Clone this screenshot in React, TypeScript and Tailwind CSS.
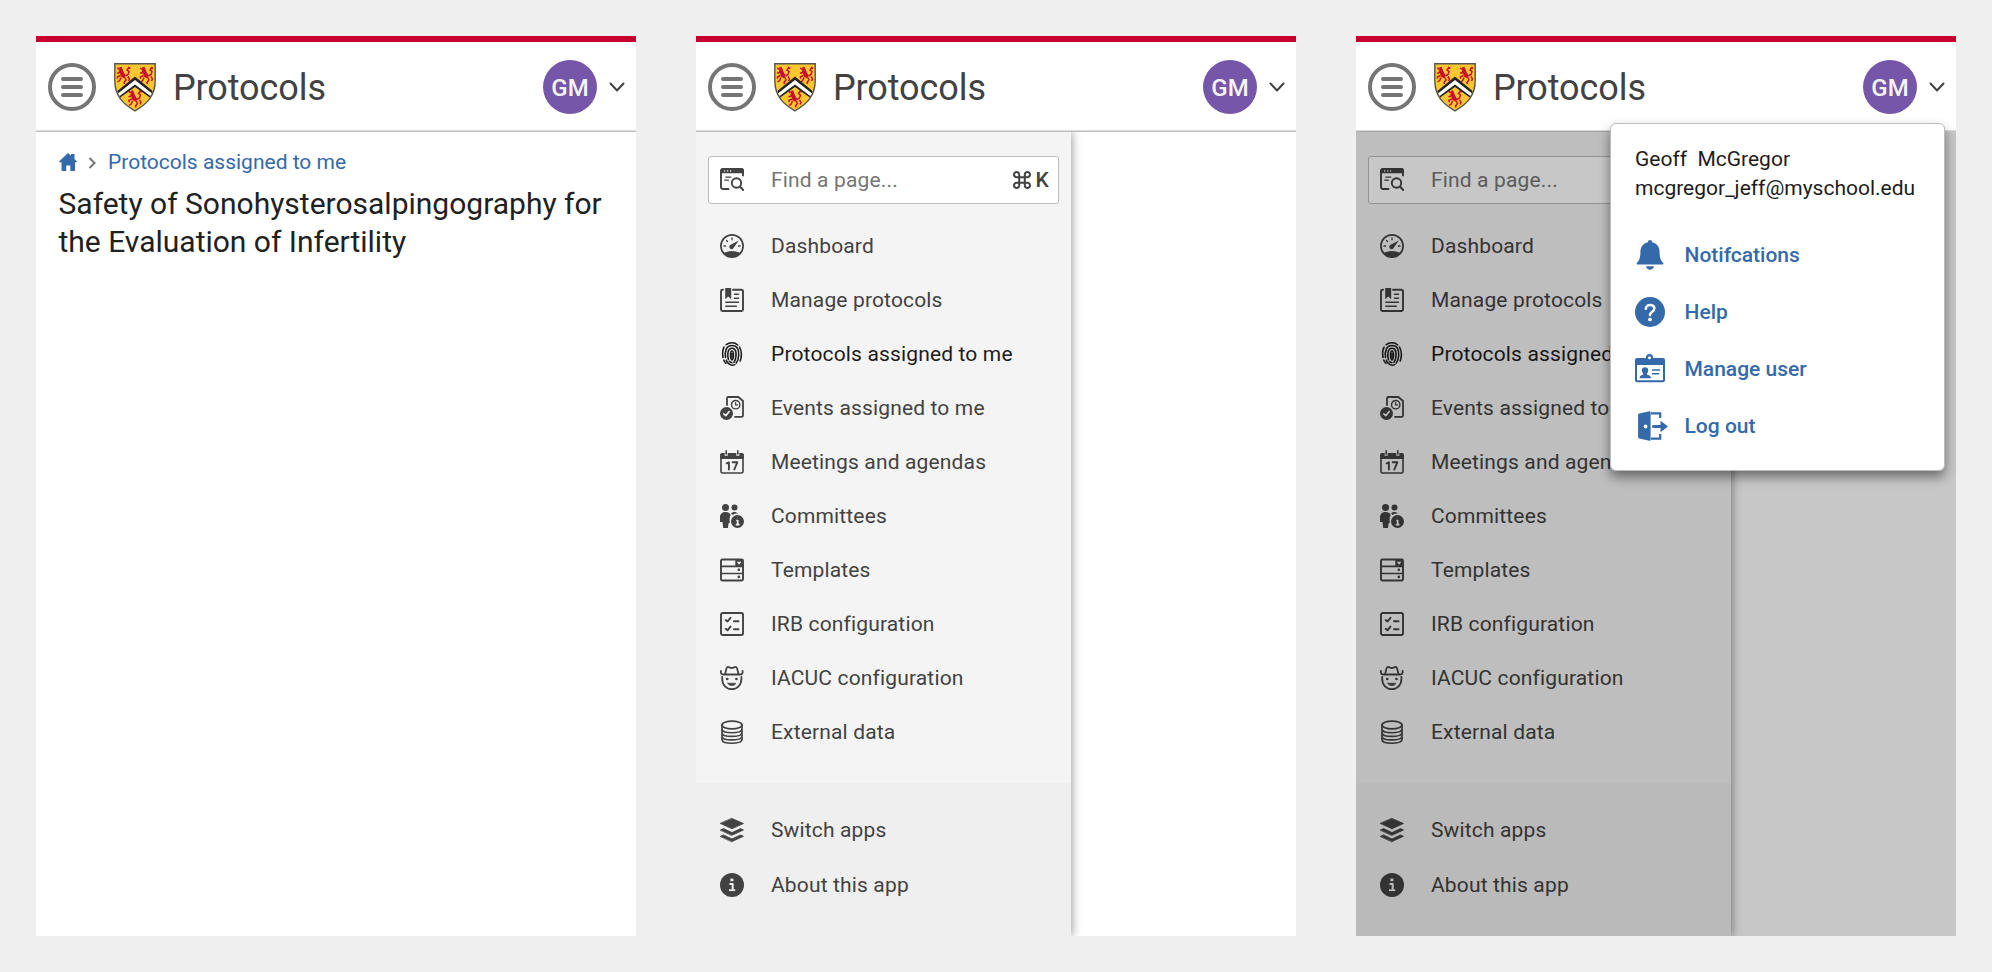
import React from "react";

const stroke = {
  fill: "none",
  stroke: "currentColor",
  strokeWidth: 1.9,
  strokeLinecap: "round" as const,
  strokeLinejoin: "round" as const,
};

function Svg({ children, className = "size-6" }: { children: React.ReactNode; className?: string }) {
  return (
    <svg viewBox="0 0 24 24" className={`${className} shrink-0 overflow-visible`} {...stroke}>
      {children}
    </svg>
  );
}

const SearchPage = () => (
  <Svg>
    <path d="M8.5 21H3a2 2 0 0 1-2-2V3a2 2 0 0 1 2-2h18a2 2 0 0 1 2 2v4.500" />
    <path d="M1 4.200V3a2 2 0 0 1 2-2h18a2 2 0 0 1 2 2v1.200z" fill="currentColor" />
    <path d="M4.600 2.900h.1M7.600 2.900h.1M10.600 2.900h.1" stroke="white" strokeWidth="1.400" />
    <path d="M5.800 9.200h5M4.800 12.200h3.600" strokeWidth="1.300" />
    <circle cx="16.500" cy="15" r="4.700" />
    <path d="m20 18.500 3.200 3.500" />
  </Svg>
);

const Gauge = () => (
  <Svg>
    <circle cx="12" cy="12" r="11.100" strokeWidth="1.700" />
    <path d="M3.800 19.300c4.500-2.300 11.900-2.300 16.400 0A11 11 0 0 1 3.800 19.300z" fill="currentColor" strokeWidth=".8" />
    <path d="M18.800 6.500 13.700 13.800a2.300 2.300 0 1 1-3.100-3z" fill="currentColor" stroke="none" />
    <path d="M12 4v1.800M6.500 6.400l1 1.100M3.900 12h1.700M18.400 12h1.700" strokeWidth="1.300" />
  </Svg>
);

const Protocol = () => (
  <Svg>
    <path d="M3 1.700H2.500A1.500 1.500 0 0 0 1 3.200v18.300A1.500 1.500 0 0 0 2.500 23h19a1.500 1.500 0 0 0 1.500-1.500V3.200a1.500 1.500 0 0 0-1.500-1.500H13" />
    <path d="M5.200 0h6v11.200L8.200 8.500l-3 2.700z" fill="currentColor" stroke="none" />
    <path d="M14.500 6.200h4M14.500 10.200h4M5.800 14.300h12.700M5.800 18.300h10.500" strokeWidth="1.500" />
  </Svg>
);

const Fingerprint = () => (
  <Svg>
    <g strokeWidth="1.600">
      <path d="M6.200 2.700A9.300 9.300 0 0 1 12 .8c2.200 0 4.200.8 5.700 2.200M19.500 5.200c1.400 2.300 1.900 4.500 1.900 7.300 0 2.400-.4 4.600-1.200 6.400M3 15.500c-.6-3.600-.6-7.500 1.100-10.300M3.800 18.200c.5 1.200 1.200 2.200 2.100 3.100" />
      <path d="M5.500 15.500C4.600 9.200 6.300 3.500 12 3.500c5.400 0 7 4.300 6.700 10-.2 3.300-1 5.700-2.500 7.600M6.300 18.200c1 2.600 2.800 4.500 5.700 5 1 .1 2-.2 2.800-.6" />
      <path d="M8.400 17.500c-1.100-3.700-1.200-11.300 3.600-11.300 3.700 0 4.300 3.900 4 7.800-.2 2.700-.8 4.700-2 6.300M9.300 19.300c.7.900 1.600 1.400 2.700 1.400" />
      <path d="M12 18c-2-1.200-2-9 0-9s2 7.800 0 9z" />
      <path d="M12 11.500v4" />
    </g>
  </Svg>
);

const EventIcon = () => (
  <Svg>
    <path d="M7 9V2.300A1.300 1.300 0 0 1 8.300 1h10L23 5v14.500a1.300 1.300 0 0 1-1.300 1.300h-6.700" strokeWidth="1.800" />
    <circle cx="15.700" cy="8.700" r="4.200" strokeWidth="1.400" />
    <path d="M15.600 6.500v2.400h2" strokeWidth="1.200" />
    <circle cx="6.500" cy="17.500" r="6.500" fill="currentColor" stroke="none" />
    <path d="m3.800 17.900 2 1.800 3.400-4.200" stroke="#f4f4f4" strokeWidth="1.600" />
  </Svg>
);

const CalendarIcon = () => (
  <Svg>
    <path d="M1 5v16.500A1.500 1.500 0 0 0 2.500 23h19a1.500 1.500 0 0 0 1.500-1.500V5" strokeWidth="1.600" />
    <path d="M.2 9V4.500A1.500 1.500 0 0 1 1.700 3h3v2.800h3V3h8.600v2.800h3V3h3a1.500 1.500 0 0 1 1.500 1.500V9z" fill="currentColor" stroke="none" />
    <path d="M6.200.7V4M17.800.7V4" strokeWidth="1.600" />
    <path d="m6.700 13.300 2.200-1v7.200M12.700 12.300h4.600l-3 7.200" />
  </Svg>
);

const People = () => (
  <Svg>
    <g fill="currentColor" stroke="none">
      <circle cx="5.500" cy="3.500" r="3.500" />
      <circle cx="14.500" cy="3.500" r="3" />
      <path d="M0 16v-3c0-3 2.300-5 5.500-5s5 1.400 5 3.500c-1 2.500-1.300 5-.5 7l-1.500 1-.5 4.500H3.200L2.500 18H0z" />
      <path d="M11 9.500C12 8 16 7 18.200 9.700c-2.200-.4-4 0-5.600 1.200z" />
      <circle cx="17.500" cy="17.500" r="6.500" />
    </g>
    <path d="M17.400 13.700h.2M16.300 16.500h1.400v4M15.700 20.700h3.800" stroke="#f4f4f4" strokeWidth="1.700" strokeLinecap="butt" />
  </Svg>
);

const Templates = () => (
  <Svg>
    <rect x="1" y="1.500" width="22" height="21" rx="1.200" />
    <path d="M1 8.300h22M1 15.500h22" strokeWidth="1.700" />
    <path d="M15.300 2h7.200v6h-7.200z" fill="currentColor" stroke="none" />
    <path d="M16.800 3.700h4.600l-2.300 3z" fill="#f4f4f4" stroke="none" />
    <path d="M18.800 11.800h.1M18.800 18.900h.1" strokeWidth="2.600" />
  </Svg>
);

const Checklist = () => (
  <Svg>
    <rect x="1" y="1" width="22" height="22" rx="1.800" />
    <path d="m5.700 8 1.800 1.500 3-3.700M5.700 16.800l1.800 1.500 3-3.700M14 9.200h4.500M14 17.200h4.500" />
  </Svg>
);

const Farmer = () => (
  <Svg>
    <g strokeWidth="1.800">
      <path d="M.9 5c-.5 2.200.6 3.500 3 3.500H19.600c2.400 0 3.500-1.300 3-3.500M4.800 8.300C6.200 6.500 5.700.9 8 .9c1.300 0 1.900 1.100 3.800 1.100S14.300.9 15.600.9c2.300 0 1.800 5.600 3.200 7.400" />
      <path d="M2.200 11v2c0 6 4.300 10.100 9.600 10.100S21.400 19 21.400 13v-2" />
    </g>
    <path d="M7.200 13h.1M16.400 13h.1" strokeWidth="2.600" />
    <path d="M7.800 17.200h8c-.7 3.200-7.300 3.200-8 0z" fill="currentColor" strokeWidth=".6" />
  </Svg>
);

const Database = () => (
  <Svg>
    <g strokeWidth="1.700">
      <ellipse cx="12" cy="5" rx="10" ry="3.900" />
      <path d="M2 5v14.500c0 5 20 5 20 0V5M2 9c0 5 20 5 20 0M2 12.700c0 5 20 5 20 0M2 16.200c0 5 20 5 20 0" />
    </g>
  </Svg>
);

const Layers = () => (
  <Svg>
    <g fill="currentColor" strokeWidth=".8">
      <path d="m12 .5 11.500 5L12 10.800.5 5.500z" />
      <path d="m.5 12 3-1.400 8.500 4 8.500-4 3 1.400L12 17.300z" />
      <path d="m.5 18.300 3-1.400 8.500 4 8.500-4 3 1.400L12 23.600z" />
    </g>
  </Svg>
);

const Info = () => (
  <Svg>
    <circle cx="12" cy="12" r="12" fill="currentColor" stroke="none" />
    <g stroke="#f0f0f0" strokeLinecap="butt">
      <path d="M10.400 6.900h3" strokeWidth="2.600" />
      <path d="M9.500 11h3.200v6" strokeWidth="2" />
      <path d="M9 17.200h6.200" strokeWidth="1.800" />
    </g>
  </Svg>
);

const Bell = () => (
  <svg viewBox="0 0 30 30" className="size-[30px] shrink-0" fill="currentColor">
    <path d="M15 0a2 2 0 0 1 2 2.200c5 1 7.600 4.800 7.600 9.800 0 5.800 1 8.500 3.300 10.500.8.900.4 2-.7 2H2.800c-1.100 0-1.500-1.100-.7-2 2.300-2 3.300-4.700 3.300-10.500 0-5 2.600-8.800 7.600-9.800A2 2 0 0 1 15 0z" />
    <path d="M11 26.300h8c-.6 4.600-7.400 4.600-8 0z" />
  </svg>
);

const Help = () => (
  <svg viewBox="0 0 30 30" className="size-[30px] shrink-0" fill="none">
    <circle cx="15" cy="15" r="15" fill="currentColor" />
    <path d="M10.800 11.800c0-5.200 8.600-5 8.600-.3 0 3.300-4.400 3.200-4.400 6.500" stroke="white" strokeWidth="2.500" strokeLinecap="round" />
    <circle cx="15" cy="22.400" r="1.900" fill="white" />
  </svg>
);

const Badge = () => (
  <svg viewBox="0 0 30 30" className="size-[30px] shrink-0 overflow-visible" fill="currentColor">
    <path
      fillRule="evenodd"
      d="M2 4h8v3.500h9V4h9a2 2 0 0 1 2 2v20.300a2 2 0 0 1-2 2H2a2 2 0 0 1-2-2V6a2 2 0 0 1 2-2zm0 7v15.300h26V11z"
    />
    <path d="M10 4v4.500h9V4h-1v-.5a3.500 3.500 0 0 0-7 0V4z" />
    <circle cx="14.500" cy="3.700" r="1.500" fill="white" />
    <path d="M10 13.200c4 0 4 4.300 2 6.300v.9c1.500.7 3.700.7 4 3.800H4.500c.3-3.100 2.500-3.100 3.700-3.800v-.9c-2-2-2.200-6.300 1.800-6.300z" />
    <path d="M17.600 15.900h7M17.600 19.800h6" stroke="currentColor" strokeWidth="1.500" strokeLinecap="round" />
  </svg>
);

const Logout = () => (
  <svg viewBox="0 0 30 30" className="ml-[3px] size-[30px] shrink-0" fill="currentColor">
    <path fillRule="evenodd" d="M1.200 2.500 11.500.2Q12.600 0 12.600 1v28q0 1-1.100.8L1.200 27.500Q.1 27.300.1 26.300V3.700q0-1 1.100-1.200zM7.600 13.600a1.900 1.900 0 1 0 0 3.800 1.900 1.900 0 0 0 0-3.800z" />
    <path d="M13 2.400h9.200V7M13 27.600h9.200V23" fill="none" stroke="currentColor" strokeWidth="2.200" />
    <path d="M15.500 15.500H25" fill="none" stroke="currentColor" strokeWidth="3" strokeLinecap="round" />
    <path d="m22.500 9.700 7.500 5.800-7.500 5.700z" />
  </svg>
);

const Lion = () => (
  <>
    <path d="M2.500 1.500 5 .8l1 2.400 1.200 3 2 3.300-1.700 2.700-3-1.400-1-3.300L2.200 6l.6-2z" fill="#c8102e" stroke="none" />
    <path d="m3.500 6.500-3 .8M.8 1.800l1.700 1.700M4 9.500 1 10.800v2M4.500 11.500l-1.300 3L1 16M8 11l1.500 3-2 2.500.5 1.500M9 10l2.500-1.500 1-3L10.500 4l1.700-2.500 1.600.8M11.500 10.500l1.500 2.500-1 2" strokeWidth="1.500" />
  </>
);

const Crest = () => (
  <svg viewBox="0 0 42 49" className="ml-[18px] h-[49px] w-[42px] shrink-0">
    <path d="M.8.8h40.400v16.400C41.200 33 33 41 21 47.800 9 41 .8 33 .8 17.200z" fill="#fdc82f" stroke="#54534d" strokeWidth="1.400" />
    <g fill="none" stroke="#c8102e">
      <g transform="translate(2.500 3)"><Lion /></g>
      <g transform="translate(25.500 3)"><Lion /></g>
      <g transform="translate(14 26.500)"><Lion /></g>
    </g>
    <path d="M21 13.500 38.600 28 35.800 34.500 21 24 6.200 34.500 3.400 28z" fill="#242424" />
    <path d="M21 17 37.800 30.300 36.300 32.900 21 21.500 5.700 32.900 4.200 30.300z" fill="white" />
  </svg>
);

function Header() {
  return (
    <header className="flex h-[95px] shrink-0 items-center border-b border-t-6 border-b-[#dcdcdc] border-t-[#c8002d] bg-white pl-3 pr-[11px] pt-[2px]">
      <svg viewBox="0 0 48 48" className="size-12 shrink-0" fill="none" stroke="#757575" strokeLinecap="round">
        <circle cx="24" cy="24" r="22" strokeWidth="4" />
        <path d="M15 16h18M15 24h18M15 32h18" strokeWidth="4" />
      </svg>
      <Crest />
      <h1 className="ml-[17px] pt-[2px] text-[36px] leading-none tracking-[-0.1px] text-[#424242]">Protocols</h1>
      <div className="ml-auto flex size-[54px] items-center justify-center rounded-full bg-[#7556a9] pt-px text-2xl font-medium text-[#f4f4f4]">
        GM
      </div>
      <svg viewBox="0 0 16 10" className="ml-3 h-[10px] w-4" fill="none" stroke="#424242" strokeWidth="2" strokeLinecap="round" strokeLinejoin="round">
        <path d="m1.500 1.500 6.500 7 6.500-7" />
      </svg>
    </header>
  );
}

const items: [string, () => React.ReactElement][] = [
  ["Dashboard", Gauge],
  ["Manage protocols", Protocol],
  ["Protocols assigned to me", Fingerprint],
  ["Events assigned to me", EventIcon],
  ["Meetings and agendas", CalendarIcon],
  ["Committees", People],
  ["Templates", Templates],
  ["IRB configuration", Checklist],
  ["IACUC configuration", Farmer],
  ["External data", Database],
];

function Drawer() {
  return (
    <nav className="flex w-[375px] flex-none flex-col bg-[#f4f4f4] text-[21px] tracking-[0.15px] text-[#424242] shadow-[1px_0_9px_rgba(0,0,0,0.4)]">
      <div className="mx-3 mt-6 flex h-12 shrink-0 items-center rounded-[3px] border-[1.500px] border-[#bdbdbd] bg-white pl-[11px] pr-[9px]">
        <SearchPage />
        <span className="ml-[27px] pt-[2px] text-[#757575]">Find a page...</span>
        <svg viewBox="0 0 18 18" className="ml-auto size-[18px]" {...stroke} strokeWidth="2">
          <path d="M6.200 6.200H3.700A2.600 2.600 0 1 1 6.200 3.700v10.600a2.600 2.600 0 1 1-2.500-2.500h10.600a2.600 2.600 0 1 1-2.500 2.500V3.700a2.600 2.600 0 1 1 2.500 2.500z" />
        </svg>
        <span className="ml-[5px] pt-px font-medium">K</span>
      </div>
      <ul className="mt-[15px] flex flex-col">
        {items.map(([label, Icon]) => (
          <li key={label} className={`flex h-[54px] items-center gap-[27px] pl-6 ${label === "Protocols assigned to me" ? "text-[#1c1c1c]" : ""}`}>
            <Icon />
            <span className="pt-[2px]">{label}</span>
          </li>
        ))}
      </ul>
      <ul className="mt-auto flex h-[153px] flex-col bg-[#efefef] pt-[19px]">
        <li className="flex h-[55px] items-center gap-[27px] pl-6">
          <Layers />
          <span className="pt-[2px]">Switch apps</span>
        </li>
        <li className="flex h-[56px] items-center gap-[27px] pl-6">
          <Info />
          <span className="pt-[2px]">About this app</span>
        </li>
      </ul>
    </nav>
  );
}

function Screen({ children }: { children: React.ReactNode }) {
  return (
    <section className="relative flex h-[900px] w-[600px] flex-col bg-white">
      <Header />
      {children}
    </section>
  );
}

const menu: [string, () => React.ReactElement][] = [
  ["Notifcations", Bell],
  ["Help", Help],
  ["Manage user", Badge],
];

export default function App() {
  return (
    <main className="flex h-[972px] w-[1992px] gap-[60px] bg-[#efefef] p-9 font-['Roboto',sans-serif]">
      <Screen>
        <div className="flex flex-col border-t border-[#bdbdbd] px-[22.500px] pt-[18px]">
          <div className="flex h-[26px] items-center text-[21px] text-[#346aa9]">
            <svg viewBox="0 0 18 18" className="h-[18px] w-[18px] -translate-y-px" fill="currentColor">
              <path d="M9 0 12 2.700V1h3.500v5l2.300 2.300q.5.900-.4 1H16v8q0 .7-.7.700h-4v-5.500H7.200V18h-4q-.7 0-.7-.7v-8H.7q-.9-.1-.4-1z" />
            </svg>
            <svg viewBox="0 0 8 12" className="ml-[11.500px] h-3 w-2" fill="none" stroke="#757575" strokeWidth="2">
              <path d="m1.500 1 5 5-5 5" />
            </svg>
            <span className="ml-3">Protocols assigned to me</span>
          </div>
          <h2 className="mt-[9px] text-[30px] leading-[37.500px] text-[#212121]">
            Safety of Sonohysterosalpingography for the Evaluation of Infertility
          </h2>
        </div>
      </Screen>
      <Screen>
        <div className="flex flex-1 overflow-hidden border-t border-[#bdbdbd]">
          <Drawer />
        </div>
      </Screen>
      <Screen>
        <div className="relative flex flex-1 overflow-hidden pt-px">
          <Drawer />
          <div className="absolute inset-0 bg-black/22" />
        </div>
        <div className="absolute left-[254px] top-[87px] flex h-[347.500px] w-[335px] flex-col rounded-md border-[1.500px] border-[#bdbdbd] bg-white pl-6 pt-[21px] shadow-[0_6px_12px_rgba(0,0,0,0.45)]">
          <p className="whitespace-pre text-[21px] leading-[28.500px] text-[#1c1c1c]">{"Geoff  McGregor\nmcgregor_jeff@myschool.edu"}</p>
          <ul className="mt-[24px] flex flex-col text-[21px] font-medium text-[#346aa9]">
            {menu.map(([label, Icon]) => (
              <li key={label} className="flex h-[57px] items-center gap-[19.500px]">
                <Icon />
                <span className="pt-[2px]">{label}</span>
              </li>
            ))}
            <li className="flex h-[57px] items-center gap-[16.500px]">
              <Logout />
              <span className="pt-[2px]">Log out</span>
            </li>
          </ul>
        </div>
      </Screen>
    </main>
  );
}
